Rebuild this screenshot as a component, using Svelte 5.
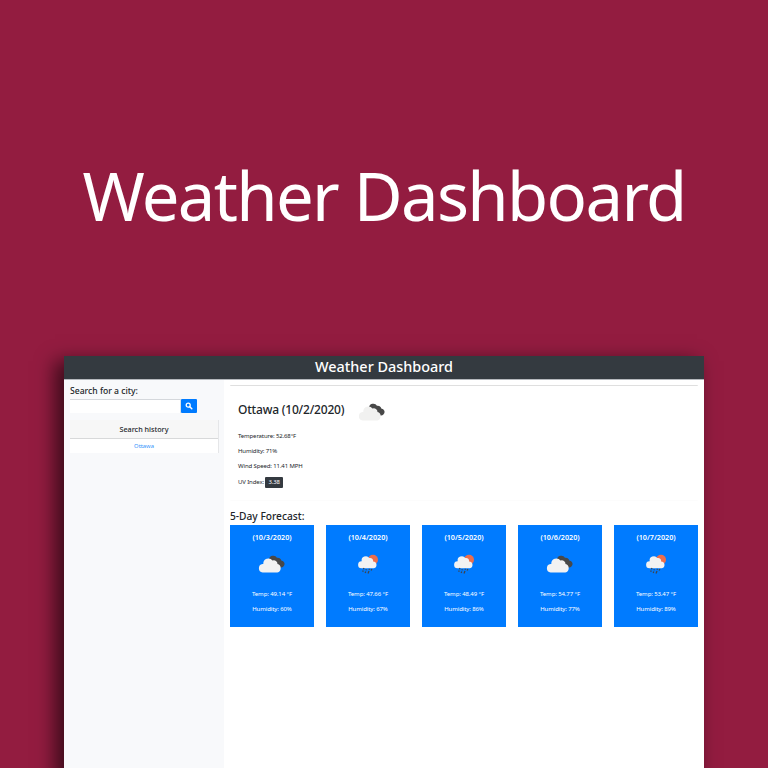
<script>
  const days = [
    { date: '10/3/2020', icon: 'clouds', temp: '49.14', humidity: 60 },
    { date: '10/4/2020', icon: 'rain', temp: '47.66', humidity: 67 },
    { date: '10/5/2020', icon: 'rain', temp: '48.49', humidity: 86 },
    { date: '10/6/2020', icon: 'clouds', temp: '54.77', humidity: 77 },
    { date: '10/7/2020', icon: 'rain', temp: '53.47', humidity: 89 }
  ];
</script>

{#snippet clouds(light)}
  <svg class="clouds" width="28" height="20" viewBox="0 0 28 20" aria-hidden="true">
    <path fill="#484848" d="M11 5a4.300 4.300 0 0 1 8-2.200 3.400 3.400 0 0 1 4.300 2.600 3.600 3.600 0 0 1 2.100 6.200c-1 1.200-3 1.200-4.300 .4L14 8z" />
    <path fill={light} d="M4.600 17.500A4.300 4.300 0 0 1 4.500 9h.8a5.100 5.100 0 0 1 9.200-3.400 3.600 3.600 0 0 1 5 3.400 4.400 4.400 0 0 1-.1 8.500z" />
  </svg>
{/snippet}

{#snippet rain()}
  <svg class="rain" width="22" height="21" viewBox="0 0 22 21" aria-hidden="true">
    <circle cx="16" cy="5.800" r="5" fill="#ec6e4c" />
    <path fill="#f2f2f2" d="M4.500 14.300a3.500 3.500 0 0 1 .2-7 4.200 4.200 0 0 1 7.600-3.200 3 3 0 0 1 3.800 3.500 3.400 3.400 0 0 1 .8 6.700z" />
    <path fill="none" stroke="#3f464f" stroke-width="1.300" d="M7 14l-.6 1.300M9.400 15.300l-.5 1M12.500 14.800l-.5 1M14.800 15l-.6 1.500M6.200 16.600l-.5 1.200M8.800 17.400l-.6 1.500M12 17l-1 2.500" />
  </svg>
{/snippet}

<main>
  <h1>Weather Dashboard</h1>
  <div class="app">
    <header>Weather Dashboard</header>
    <div class="body">
      <aside>
        <div class="label">Search for a city:</div>
        <div class="search">
          <input aria-label="City" />
          <button aria-label="Search">
            <svg width="8" height="8" viewBox="0 0 8 8"><circle cx="3.200" cy="3.200" r="2" fill="none" stroke="#fff" stroke-width="1.300" /><path d="M4.800 4.800l2 2" stroke="#fff" stroke-width="1.500" stroke-linecap="round" /></svg>
          </button>
        </div>
        <div class="history">
          <div class="history-title">Search history</div>
          <div class="history-item">Ottawa</div>
        </div>
      </aside>
      <section>
        <div class="current">
          <div class="city"><h2>Ottawa (10/2/2020)</h2>{@render clouds('#f1f1f0')}</div>
          <p>Temperature: 52.68°F</p>
          <p>Humidity: 71%</p>
          <p>Wind Speed: 11.41 MPH</p>
          <p>UV Index: <b>3.38</b></p>
        </div>
        <h3>5-Day Forecast:</h3>
        <div class="forecast">
          {#each days as day}
            <article>
              <h4>({day.date})</h4>
              <div class="icon">
                {#if day.icon === 'clouds'}{@render clouds('#f2f2f2')}{:else}{@render rain()}{/if}
              </div>
              <p>Temp: {day.temp} °F</p>
              <p>Humidity: {day.humidity}%</p>
            </article>
          {/each}
        </div>
      </section>
    </div>
  </div>
</main>

<style>
  :global(body) { background: #931c40; overflow: hidden; }
  * { box-sizing: border-box; }
  main { width: 768px; height: 768px; overflow: hidden; background: #931c40; font-family: 'Noto Sans', 'Open Sans', sans-serif; color: #212529; }
  h1, h2, h3, h4, p { margin: 0; font-weight: 400; white-space: nowrap; }
  h1 { height: 356px; padding-top: 149px; text-align: center; font-size: 67px; line-height: 92px; color: #fff; letter-spacing: -1.680px; }
  .app { width: 640px; height: 420px; margin: 0 auto; background: #fff; box-shadow: -8px 6px 18px 1px rgba(0, 0, 0, .6); display: flex; flex-direction: column; }
  header { height: 24px; flex: none; background: #343a40; border-bottom: 1px solid #b5b8bd; color: #fff; text-align: center; font-size: 14.400px; line-height: 21px; font-weight: 500; }
  .body { flex: 1; display: flex; }
  aside { width: 160px; padding: 5px 5px 0 6px; background: #f8f9fb; }
  .label { height: 14px; font-size: 8.600px; line-height: 13px; font-weight: 500; white-space: nowrap; }
  .search { display: flex; height: 15px; }
  input { width: 111px; height: 14px; padding: 0; border: 0; border-top: 1px solid #d5d8dc; border-right: 1px solid #dfe2e5; background: #fff; outline: none; }
  button { width: 16px; height: 14px; padding: 0; border: 0; border-radius: 1px; background: #007bff; display: flex; align-items: center; justify-content: center; }
  .history { width: 149px; margin-top: 6px; border-right: 1px solid #e5e6e8; text-align: center; }
  .history-title { height: 19px; background: #f7f7f7; border-bottom: 1px solid #d8d9da; font-size: 7.200px; line-height: 18px; font-weight: 500; }
  .history-item { height: 14px; background: #fff; color: #3594fb; font-size: 5.800px; line-height: 14px; }
  section { width: 480px; padding: 5px 6px 0; }
  .current { height: 116px; border-top: 1px solid #dfdfdf; border-bottom: 1px solid #fcfcfc; padding: 9px 0 0 8px; border-radius: 1px; }
  .city { display: flex; height: 34px; }
  h2 { width: 120px; font-size: 12px; line-height: 30px; font-weight: 500; letter-spacing: -.2px; }
  .city svg { margin-top: 8px; }
  .current p { height: 15.200px; font-size: 6px; line-height: 15px; letter-spacing: -.12px; }
  b { display: inline-block; height: 11px; line-height: 11px; padding: 0 3px; border-radius: 1px; background: #343a40; color: #fff; font-weight: 400; }
  h3 { height: 24px; font-size: 10.200px; line-height: 31px; font-weight: 500; }
  .forecast { display: flex; gap: 12px; }
  article { width: 84px; height: 102px; padding-top: 5px; background: #007bff; color: #fff; text-align: center; }
  h4 { height: 16px; font-size: 7.200px; line-height: 15px; font-weight: 600; }
  .icon { height: 41px; padding-top: 9px; }
  .icon .rain { margin-top: -1px; }
  article p { height: 15px; font-size: 6px; line-height: 15px; letter-spacing: -.1px; }
</style>
